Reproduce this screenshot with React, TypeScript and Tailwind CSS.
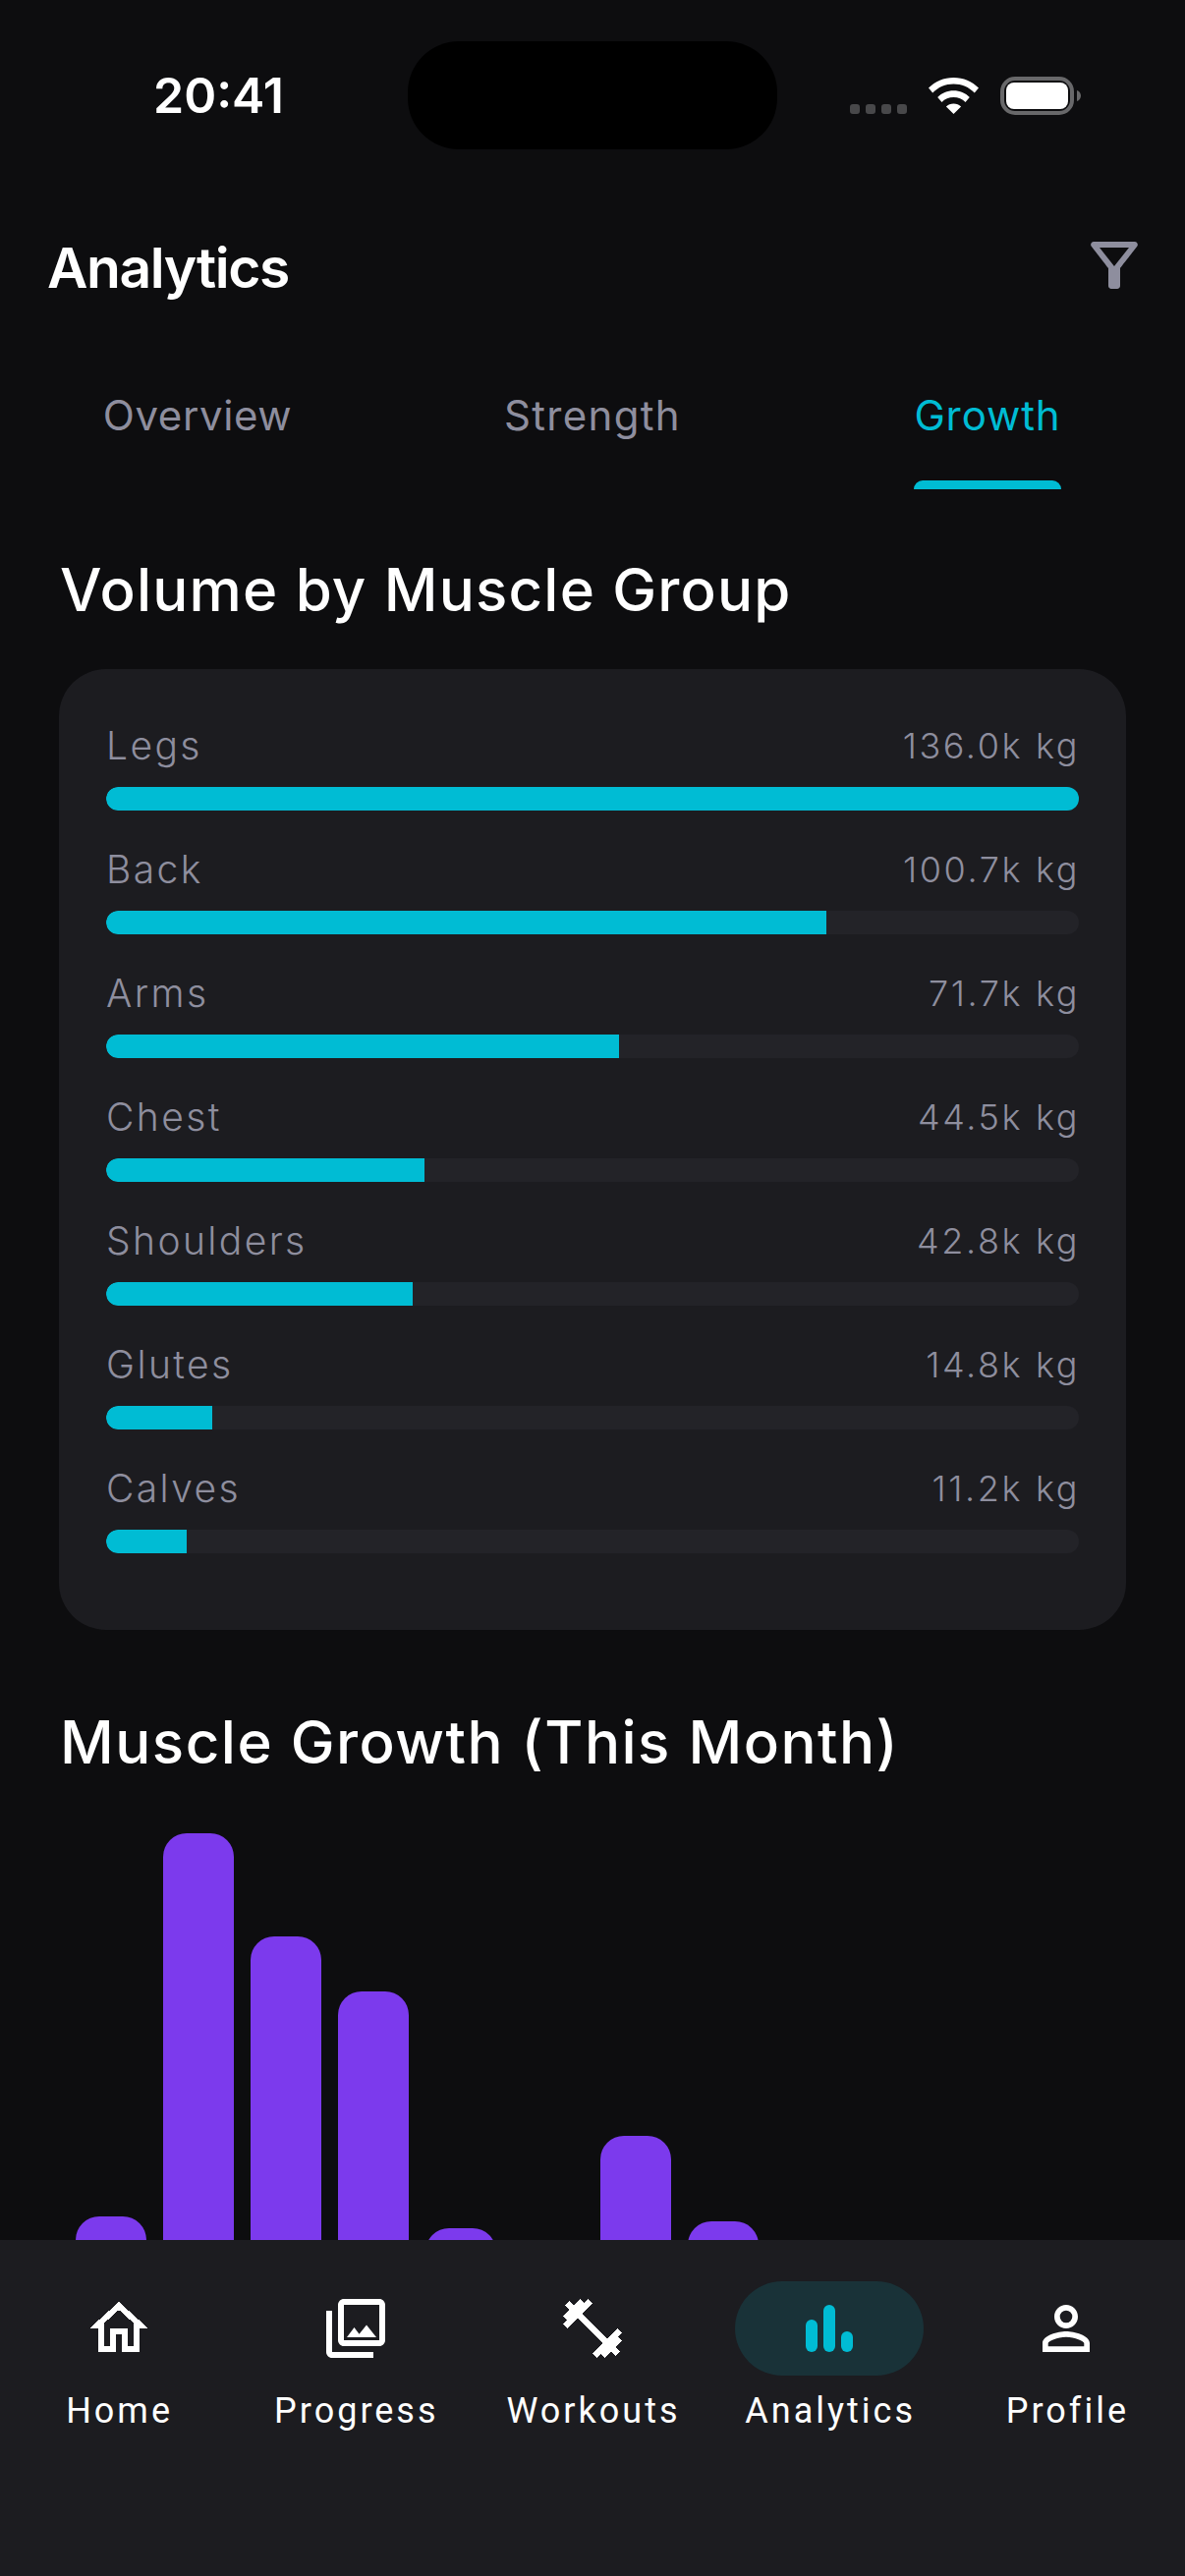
import React from "react";

const muscleGroups = [
  { name: "Legs", volume: 136.0 },
  { name: "Back", volume: 100.7 },
  { name: "Arms", volume: 71.7 },
  { name: "Chest", volume: 44.5 },
  { name: "Shoulders", volume: 42.8 },
  { name: "Glutes", volume: 14.8 },
  { name: "Calves", volume: 11.2 },
];

const growthBars = [144, 534, 429, 373, 132, 0, 226, 139, 0, 0, 0, 0];

const tabs = [
  { label: "Overview", className: "text-[42px] leading-[60px] tracking-[0.6px] text-[#8E8E9E] px-[1px]" },
  { label: "Strength", className: "text-[42px] leading-[60px] tracking-[1.3px] text-[#8E8E9E] px-[1px]" },
  { label: "Growth", className: "text-[42px] leading-[60px] tracking-[0.9px] text-[#00BCD4]" },
];

const navItems = [
  {
    label: "Home",
    crisp: true,
    d: "M12 5.69l5 4.5V18h-2v-6H9v6H7v-7.81l5-4.5M12 3L2 12h3v8h6v-6h2v6h6v-8h3L12 3z",
  },
  {
    label: "Progress",
    crisp: false,
    d: "M20 4v12H8V4h12m0-2H8c-1.1 0-2 .9-2 2v12c0 1.1.9 2 2 2h12c1.1 0 2-.9 2-2V4c0-1.1-.9-2-2-2zm-8.5 9.67l1.69 2.26 2.48-3.1L19 15H9zM2 6v14c0 1.1.9 2 2 2h14v-2H4V6H2z",
  },
  {
    label: "Workouts",
    crisp: true,
    d: "M20.57 14.86L22 13.43 20.57 12 17 15.57 8.43 7 12 3.43 10.57 2 9.14 3.43 7.71 2 5.57 4.14 4.14 2.71 2.71 4.14l1.43 1.43L2 7.71l1.43 1.43L2 10.57 3.43 12 7 8.43 15.57 17 12 20.57 13.43 22l1.43-1.43L16.29 22l2.14-2.14 1.43 1.43 1.43-1.43-1.43-1.43L22 16.29z",
  },
  { label: "Analytics", crisp: false, d: "" },
  {
    label: "Profile",
    crisp: false,
    d: "M12 5.9a2.1 2.1 0 110 4.2 2.1 2.1 0 010-4.2m0 9c2.97 0 6.1 1.46 6.1 2.1v1.1H5.9V17c0-.64 3.13-2.1 6.1-2.1M12 4C9.79 4 8 5.79 8 8s1.79 4 4 4 4-1.79 4-4-1.79-4-4-4zm0 9c-2.67 0-8 1.34-8 4v3h16v-3c0-2.66-5.33-4-8-4z",
  },
];

function StatusBar() {
  return (
    <div className="flex h-[110px] mt-[42px] items-center">
      <div className="w-[415px] pl-[156px] text-[50px] leading-none font-semibold text-white">20:41</div>
      <div className="w-[376px] h-[110px] rounded-[52px] bg-black" />
      <div className="flex items-center pl-[74px]">
        <svg width="58" height="37" viewBox="0 0 58 37" className="mr-[22px]">
          {[0, 16, 32, 48].map((x) => (
            <rect key={x} x={x} y="27" width="10" height="10" rx="3" fill="#48484A" />
          ))}
        </svg>
        <svg width="51" height="37" viewBox="0 0 51 37" className="mr-[22px]">
          <path d="M25.500 0C15.500 0 6.800 3.900 0 10.600l4.200 4.900C9.800 9.900 17.300 6.600 25.500 6.600s15.700 3.300 21.300 8.900l4.200-4.900C44.200 3.900 35.500 0 25.500 0z" fill="#fff" />
          <path d="M25.500 13.300c-6.300 0-12 2.500-16.300 6.600l4.300 5c3.100-3 7.300-4.900 12-4.900s8.900 1.900 12 4.900l4.300-5c-4.300-4.100-10-6.600-16.300-6.600z" fill="#fff" />
          <path d="M25.500 26.500c-3 0-5.600 1.100-7.600 3l7.600 7.500 7.600-7.500c-2-1.900-4.600-3-7.600-3z" fill="#fff" />
        </svg>
        <svg width="82" height="39" viewBox="0 0 82 39">
          <rect x="2" y="2" width="71" height="35" rx="13" fill="none" stroke="#68686A" strokeWidth="4" />
          <rect x="6" y="6" width="63" height="27" rx="8" fill="#fff" />
          <path d="M78 14c2.400.8 4 3 4 5.500S80.400 24.200 78 25z" fill="#68686A" />
        </svg>
      </div>
    </div>
  );
}

function Tabs() {
  return (
    <div className="grid grid-cols-3 mt-[87px]">
      {tabs.map((tab) => {
        const active = tab.label === "Growth";
        return (
          <div key={tab.label} className="flex justify-center">
            <div className="flex flex-col items-stretch">
              <span className={tab.className}>{tab.label}</span>
              <div className={active ? "mt-[36px] h-[9px] rounded-t-[9px] bg-[#00BCD4]" : "mt-[36px] h-[9px]"} />
            </div>
          </div>
        );
      })}
    </div>
  );
}

function VolumeCard() {
  const max = muscleGroups[0].volume;
  return (
    <div className="mx-[60px] rounded-[48px] bg-[#1C1C20] pt-[48px] pb-[48px] px-[48px]">
      {muscleGroups.map((group) => (
        <div key={group.name} className="mb-[30px]">
          <div className="flex justify-between mb-[12px] h-[60px] items-center text-[39px] leading-[60px] tracking-[2.4px] font-[350] text-[#8E8E9E]">
            <span>{group.name}</span>
            <span className="text-[36px] tracking-[2.6px] -mr-[1px]">{group.volume.toFixed(1)}k kg</span>
          </div>
          <div className="h-[24px] rounded-[12px] bg-[#232328] overflow-hidden">
            <div className="h-full rounded-l-[12px] bg-[#00BCD4]" style={{ width: `${(group.volume / max) * 100}%` }} />
          </div>
        </div>
      ))}
    </div>
  );
}

function GrowthChart() {
  return (
    <div className="mt-[57px] h-[534px] flex items-end gap-[17px] pl-[77px]">
      {growthBars.map((h, i) => (
        <div key={i} className="w-[72px] shrink-0 rounded-t-[24px] bg-[#7C3AED]" style={{ height: h }} />
      ))}
    </div>
  );
}

function BottomNav() {
  return (
    <nav className="h-[342px] shrink-0 bg-[#1C1C20] grid grid-cols-5 pt-[42px] content-start">
      {navItems.map((item) => {
        const active = item.label === "Analytics";
        return (
          <div key={item.label} className="flex flex-col items-center">
            <div className={active ? "w-[192px] h-[96px] rounded-[48px] bg-[#193238] flex items-center justify-center" : "w-[192px] h-[96px] flex items-center justify-center"}>
              <svg width="72" height="72" viewBox="0 0 24 24" shapeRendering={item.crisp ? "crispEdges" : undefined}>
                {active ? (
                  <g fill="#00BCD4">
                    <rect x="4" y="9" width="4" height="11" rx="2" />
                    <rect x="10" y="4" width="4" height="16" rx="2" />
                    <rect x="16" y="13" width="4" height="7" rx="2" />
                  </g>
                ) : (
                  <path d={item.d} fill="#fff" />
                )}
              </svg>
            </div>
            <span className="mt-[12px] pl-[2px] font-['Roboto',sans-serif] text-[36px] leading-[48px] tracking-[3px] text-white">{item.label}</span>
          </div>
        );
      })}
    </nav>
  );
}

export default function App() {
  return (
    <div className="w-[1206px] h-[2622px] flex flex-col overflow-hidden bg-[#0D0D0F] font-['Inter',sans-serif]">
      <main className="flex-1 min-h-0 overflow-hidden">
        <StatusBar />
        <header className="mt-[82px] h-[72px] flex items-center justify-between pl-[48px] pr-[36px]">
          <h1 className="text-[57px] leading-[72px] pt-[5px] tracking-[-1.4px] font-semibold text-white">Analytics</h1>
          <svg width="72" height="72" viewBox="0 0 24 24">
            <path d="M7 6h10l-5.010 6.300L7 6zm-2.750-.390C6.270 8.200 10 13 10 13v6c0 .550.450 1 1 1h2c.550 0 1-.450 1-1v-6s3.720-4.800 5.740-7.390c.510-.660.040-1.610-.790-1.610H5.040c-.830 0-1.300.950-.790 1.610z" fill="#8E8E9E" />
          </svg>
        </header>
        <Tabs />
        <h2 className="mt-[66px] mb-[45px] ml-[61px] text-[60px] leading-[72px] font-medium tracking-[1.2px] text-white">Volume by Muscle Group</h2>
        <VolumeCard />
        <h2 className="mt-[78px] ml-[61px] text-[60px] leading-[72px] font-medium tracking-[1.5px] text-white">Muscle Growth (This Month)</h2>
        <GrowthChart />
      </main>
      <BottomNav />
    </div>
  );
}
